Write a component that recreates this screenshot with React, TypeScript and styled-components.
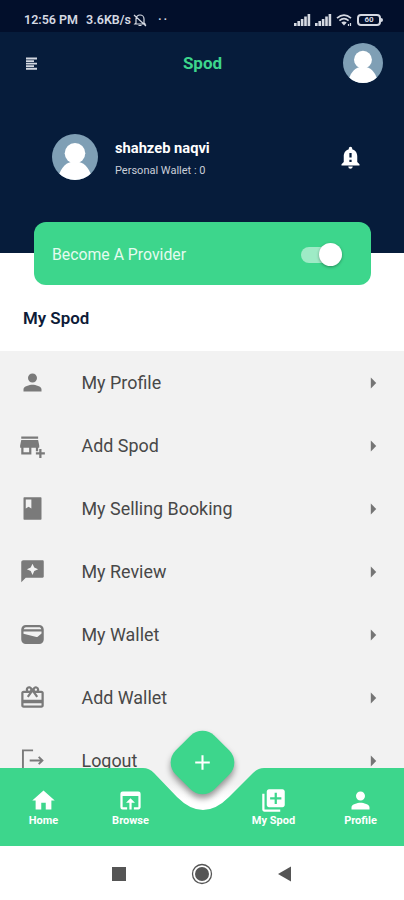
import React, { useState } from 'react';
import styled, { createGlobalStyle } from 'styled-components';
import {
  MdPerson,
  MdAddBusiness,
  MdOutlineRedeem,
  MdNotificationImportant,
  MdHome,
  MdOpenInBrowser,
  MdLibraryAdd,
  MdAdd,
  MdArrowRight,
} from 'react-icons/md';

const GlobalStyle = createGlobalStyle`
  *, *::before, *::after {
    box-sizing: border-box;
  }

  :root {
    --green: #3dd68c;
    --navy: #061c3b;
    --icon: #7a7a7a;
  }

  body {
    margin: 0;
    background: #ffffff;
    font-family: Roboto, sans-serif;
  }

  svg {
    display: block;
  }

  button {
    padding: 0;
    border: none;
    background: none;
    font: inherit;
    color: inherit;
  }
`;

const Screen = styled.div`
  display: flex;
  flex-direction: column;
  width: 404px;
  height: 900px;
  overflow: hidden;
  background: #ffffff;
`;

const Hero = styled.header`
  flex: none;
  height: 253px;
  background: var(--navy);
`;

const StatusBar = styled.div`
  display: flex;
  align-items: center;
  justify-content: space-between;
  height: 32px;
  padding: 8px 20px 0 24px;
  background: #020f2b;
  color: #d5d9e2;
`;

const StatusGroup = styled.div<{ gap: number }>`
  display: flex;
  align-items: center;
  gap: ${props => props.gap}px;
  font-size: 12.5px;
  font-weight: 600;
  line-height: 14px;
`;

const NetSpeed = styled.span`
  margin-left: 6px;
`;

const StatusDots = styled.span`
  margin-left: 9px;
  letter-spacing: 2px;
`;

const AppBar = styled.div`
  display: grid;
  grid-template-columns: 40px 1fr 40px;
  align-items: center;
  height: 62px;
  padding: 0 21px 0 25px;
`;

const AppTitle = styled.h1`
  margin: 0 3px 0 0;
  color: var(--green);
  font-size: 17px;
  font-weight: 700;
  text-align: center;
`;

const UserRow = styled.section`
  display: flex;
  align-items: center;
  height: 46px;
  margin-top: 40px;
  padding: 0 40px 0 52px;
`;

const UserInfo = styled.div`
  flex: 1;
  margin-left: 17px;
  padding-top: 3px;
  color: #ffffff;
`;

const UserName = styled.div`
  font-size: 14.7px;
  font-weight: 700;
  line-height: 20px;
`;

const WalletText = styled.div`
  margin-top: 5px;
  color: #c9ced8;
  font-size: 11px;
  line-height: 16px;
`;

const ProviderCard = styled.section`
  display: flex;
  align-items: center;
  justify-content: space-between;
  flex: none;
  height: 63px;
  margin: -31px 33px 0 34px;
  padding: 2px 29px 0 18px;
  border-radius: 12px;
  background: var(--green);
  color: #e4fbef;
  font-size: 15.8px;
`;

const Track = styled.button<{ on: boolean }>`
  display: flex;
  align-items: center;
  justify-content: ${props => (props.on ? 'flex-end' : 'flex-start')};
  width: 41px;
  height: 16px;
  border-radius: 8px;
  background: #9eebc6;
`;

const Thumb = styled.span`
  width: 23px;
  height: 23px;
  border-radius: 50%;
  background: #ffffff;
  box-shadow: 0 1px 3px rgba(0, 0, 0, 0.35);
`;

const SectionTitle = styled.h2`
  flex: none;
  height: 66px;
  margin: 0;
  padding: 0 23px;
  color: #0d1b38;
  font-size: 16.9px;
  font-weight: 600;
  line-height: 67px;
`;

const Menu = styled.nav`
  flex: none;
  height: 417px;
  overflow: hidden;
  background: #f2f2f2;
`;

const MenuRow = styled.a`
  display: flex;
  align-items: center;
  height: 63px;
  padding: 0 18px 0 18.5px;
  color: #484848;
  font-size: 17.9px;
`;

const MenuIcon = styled.span`
  width: 63px;
  color: var(--icon);
`;

const MenuLabel = styled.span`
  flex: 1;
  padding-bottom: 1px;
`;

const BottomBar = styled.footer`
  position: relative;
  flex: none;
  height: 78px;
  color: #ffffff;
`;

const BarShape = styled.svg`
  position: absolute;
  left: 0;
  top: 0;
`;

const Tabs = styled.div`
  position: relative;
  display: grid;
  grid-template-columns: 87px 87px 56px 87px 87px;
  height: 78px;
`;

const Tab = styled.a`
  display: flex;
  flex-direction: column;
  align-items: center;
  padding-top: 19px;
  font-size: 11px;
  font-weight: 700;
  line-height: 14px;
`;

const AddButton = styled.button`
  position: absolute;
  left: 175px;
  top: -33px;
  display: grid;
  place-items: center;
  width: 55px;
  height: 55px;
  border-radius: 17px;
  background: var(--green);
  box-shadow: 3px 3px 6px rgba(0, 0, 0, 0.4);
  transform: rotate(45deg);

  svg {
    transform: rotate(-45deg);
  }
`;

const SystemBar = styled.div`
  display: flex;
  align-items: center;
  justify-content: center;
  gap: 65px;
  flex: 1;
  padding-top: 1px;
  color: #555555;
`;

const SignalIcon = () => (
  <svg width="17" height="12" viewBox="0 0 17 12" fill="currentColor">
    <rect x="0" y="9" width="2.6" height="3" />
    <rect x="3.4" y="7" width="2.6" height="5" />
    <rect x="6.8" y="5" width="2.6" height="7" />
    <rect x="10.2" y="2.5" width="2.6" height="9.5" />
    <rect x="13.6" y="0" width="2.6" height="12" />
  </svg>
);

const WifiIcon = () => (
  <svg width="17" height="13" viewBox="0 0 17 13" fill="none" stroke="currentColor" strokeWidth="1.7">
    <path d="M1 4.2Q8 -2 15 4.2M3.4 6.6Q8 2.8 12.6 6.6" />
    <path d="M5.3 8.5Q8 6.4 10.7 8.5L8 11.5z" fill="currentColor" stroke="none" />
    <path d="M12.5 10v2M14.5 9v3" strokeWidth="1.2" />
  </svg>
);

const MutedBellIcon = () => (
  <svg width="14" height="14" viewBox="0 0 14 14" fill="none" stroke="currentColor" strokeWidth="1.2">
    <path d="M3 10V6a4 4 0 0 1 8 0v4l1 1H2zM5.5 12.5h3M1 2L13 13" />
  </svg>
);

const Battery = styled.span`
  position: relative;
  display: grid;
  place-items: center;
  width: 24px;
  height: 12px;
  margin-right: 3px;
  border: 2px solid currentColor;
  border-radius: 4px;
  font-size: 8px;
  font-weight: 700;
  line-height: 8px;

  &::after {
    content: '';
    position: absolute;
    right: -4px;
    top: 2px;
    width: 2px;
    height: 4px;
    border-radius: 0 2px 2px 0;
    background: currentColor;
  }
`;

const MenuLinesIcon = () => (
  <svg width="13" height="13" viewBox="0 0 13 13" stroke="#d3d8e1" strokeWidth="1.9">
    <path d="M1 1.5h11M1 4.1h8M1 6.6h11M1 9.1h8M1 11.7h11" />
  </svg>
);

const Avatar = ({ size }: { size: number }) => (
  <svg width={size} height={size} viewBox="0 0 46 46">
    <defs>
      <clipPath id={`avatar-${size}`}>
        <circle cx="23" cy="23" r="23" />
      </clipPath>
    </defs>
    <g clipPath={`url(#avatar-${size})`}>
      <rect width="46" height="46" fill="#7f9fb5" />
      <circle cx="23" cy="19.3" r="10.3" fill="#ffffff" />
      <path d="M6 46C7 36 13 29 19 28h8c6 1 12 8 13 18z" fill="#ffffff" />
    </g>
  </svg>
);

const BookingIcon = () => (
  <svg width="27" height="27" viewBox="0 0 24 24" fill="currentColor" fillRule="evenodd">
    <path d="M4.6 2h14.8q.6 0 .6.6v18.8q0 .6-.6.6H4.6q-.6 0-.6-.6V2.6q0-.6.6-.6zM6 4v8l2.500-1.500L11 12V4z" />
  </svg>
);

const ReviewIcon = () => (
  <svg width="27" height="27" viewBox="0 0 24 24" fill="currentColor">
    <path d="M21 2H3.8c-1 0-1.8.8-1.8 1.800V21.500l4-4H21c.6 0 1-.4 1-1V3c0-.6-.4-1-1-1zM13.570 11.570L12 15l-1.570-3.430L7 10l3.430-1.570L12 5l1.570 3.430L17 10z" />
  </svg>
);

const WalletIcon = () => (
  <svg width="27" height="27" viewBox="0 0 24 24" fill="currentColor" fillRule="evenodd">
    <path d="M6 3.600h12a4 4 0 0 1 4 4v8.800a4 4 0 0 1-4 4H6a4 4 0 0 1-4-4V7.600a4 4 0 0 1 4-4zM4.200 7.400h15.600C19.500 6.100 18.700 5.600 17.800 5.600H6.200c-1 0-1.700.6-2 1.800zM4 9.300v2l11.500 2.900c.4.1.8 0 1.100-.2L20 11.100V9.300z" />
  </svg>
);

const LogoutIcon = () => (
  <svg width="27" height="27" viewBox="0 0 24 24" fill="none" stroke="currentColor" strokeWidth="1.7">
    <path d="M12.500 3H3.500v18h9M9.500 12h11M17.500 8.800L20.800 12l-3.300 3.200" />
  </svg>
);

const menuItems = [
  { label: 'My Profile', icon: <MdPerson size={27} /> },
  { label: 'Add Spod', icon: <MdAddBusiness size={27} /> },
  { label: 'My Selling Booking', icon: <BookingIcon /> },
  { label: 'My Review', icon: <ReviewIcon /> },
  { label: 'My Wallet', icon: <WalletIcon /> },
  { label: 'Add Wallet', icon: <MdOutlineRedeem size={27} /> },
  { label: 'Logout', icon: <LogoutIcon /> },
];

const App: React.FC = () => {
  const [isProvider, setIsProvider] = useState(true);

  return (
    <>
      <GlobalStyle />
      <Screen>
        <Hero>
          <StatusBar>
            <StatusGroup gap={2}>
              <span>12:56 PM</span>
              <NetSpeed>3.6KB/s</NetSpeed>
              <MutedBellIcon />
              <StatusDots>··</StatusDots>
            </StatusGroup>
            <StatusGroup gap={4}>
              <SignalIcon />
              <SignalIcon />
              <WifiIcon />
              <Battery>60</Battery>
            </StatusGroup>
          </StatusBar>

          <AppBar>
            <MenuLinesIcon />
            <AppTitle>Spod</AppTitle>
            <Avatar size={40} />
          </AppBar>

          <UserRow>
            <Avatar size={46} />
            <UserInfo>
              <UserName>shahzeb naqvi</UserName>
              <WalletText>Personal Wallet : 0</WalletText>
            </UserInfo>
            <MdNotificationImportant size={27} color="#ffffff" />
          </UserRow>
        </Hero>

        <ProviderCard>
          Become A Provider
          <Track on={isProvider} onClick={() => setIsProvider(!isProvider)}>
            <Thumb />
          </Track>
        </ProviderCard>

        <SectionTitle>My Spod</SectionTitle>

        <Menu>
          {menuItems.map(item => (
            <MenuRow key={item.label}>
              <MenuIcon>{item.icon}</MenuIcon>
              <MenuLabel>{item.label}</MenuLabel>
              <MdArrowRight size={26} color="#757575" />
            </MenuRow>
          ))}
        </Menu>

        <BottomBar>
          <BarShape width="404" height="78" viewBox="0 0 404 78">
            <defs>
              <linearGradient id="notch" x1="0" y1="0" x2="0" y2="1">
                <stop offset="0.2" stopColor="#f2f2f2" />
                <stop offset="0.4" stopColor="#ffffff" />
              </linearGradient>
            </defs>
            <rect width="404" height="78" fill="url(#notch)" />
            <path
              d="M0 0H143Q149 0 154 5L177 29Q190 42 203 42Q216 42 229 29L253 5Q258 0 264 0H404V78H0z"
              fill="#3dd68c"
            />
          </BarShape>
          <Tabs>
            <Tab>
              <MdHome size={27} />
              Home
            </Tab>
            <Tab>
              <MdOpenInBrowser size={27} />
              Browse
            </Tab>
            <span />
            <Tab>
              <MdLibraryAdd size={27} />
              My Spod
            </Tab>
            <Tab>
              <MdPerson size={27} />
              Profile
            </Tab>
          </Tabs>
          <AddButton>
            <MdAdd size={25} />
          </AddButton>
        </BottomBar>

        <SystemBar>
          <svg width="14" height="14" viewBox="0 0 14 14" fill="currentColor">
            <rect width="14" height="14" />
          </svg>
          <svg width="22" height="22" viewBox="0 0 22 22">
            <circle cx="11" cy="11" r="9.5" fill="none" stroke="currentColor" strokeWidth="1.3" />
            <circle cx="11" cy="11" r="7" fill="currentColor" />
          </svg>
          <svg width="14" height="16" viewBox="0 0 14 16" fill="currentColor">
            <path d="M0 8L13 0.500V15.500z" />
          </svg>
        </SystemBar>
      </Screen>
    </>
  );
};

export default App;
